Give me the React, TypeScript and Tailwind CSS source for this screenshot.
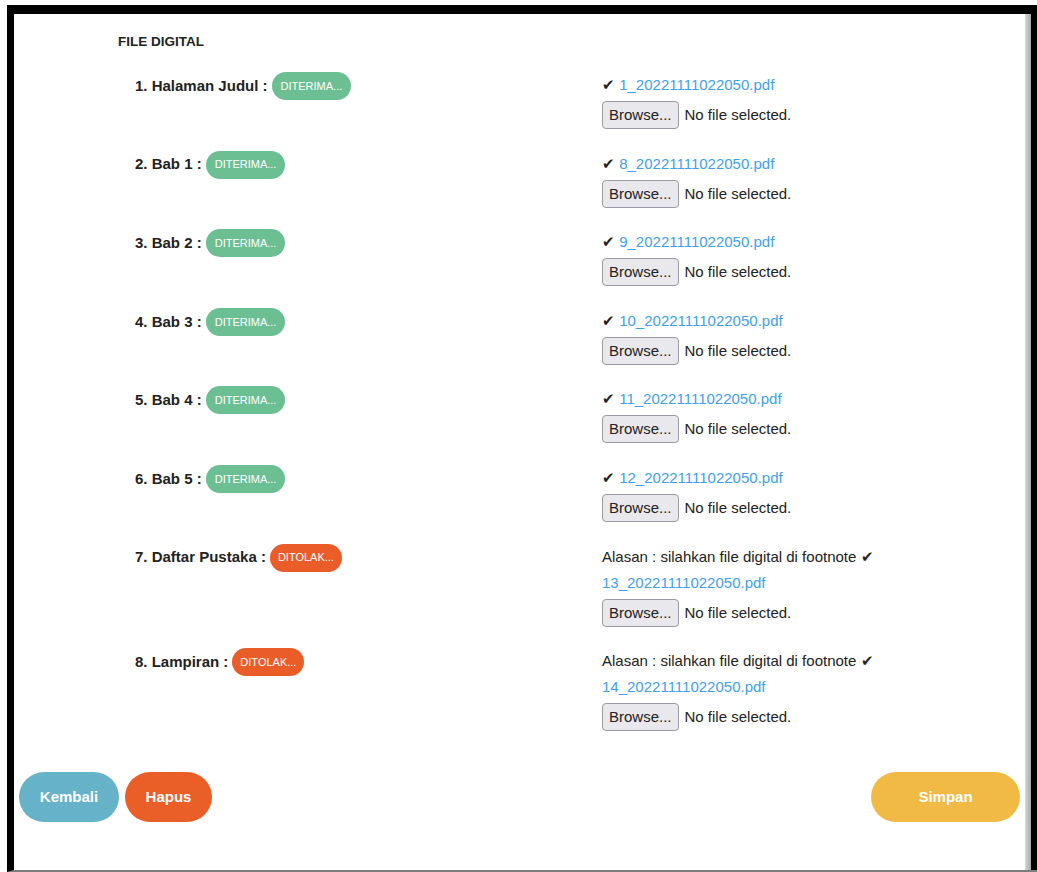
import React from 'react';

type Status = 'diterima' | 'ditolak';

interface BerkasRow {
  label: string;
  status: Status;
  file: string;
  alasan?: string;
}

const rows: BerkasRow[] = [
  { label: '1. Halaman Judul :', status: 'diterima', file: '1_20221111022050.pdf' },
  { label: '2. Bab 1 :', status: 'diterima', file: '8_20221111022050.pdf' },
  { label: '3. Bab 2 :', status: 'diterima', file: '9_20221111022050.pdf' },
  { label: '4. Bab 3 :', status: 'diterima', file: '10_20221111022050.pdf' },
  { label: '5. Bab 4 :', status: 'diterima', file: '11_20221111022050.pdf' },
  { label: '6. Bab 5 :', status: 'diterima', file: '12_20221111022050.pdf' },
  {
    label: '7. Daftar Pustaka :',
    status: 'ditolak',
    file: '13_20221111022050.pdf',
    alasan: 'silahkan file digital di footnote',
  },
  {
    label: '8. Lampiran :',
    status: 'ditolak',
    file: '14_20221111022050.pdf',
    alasan: 'silahkan file digital di footnote',
  },
];

const StatusBadge: React.FC<{ status: Status }> = ({ status }) =>
  status === 'diterima' ? (
    <span className="flex h-[28px] items-center rounded-full bg-[#6cbf93] px-[9px] text-[11px] text-white">
      DITERIMA...
    </span>
  ) : (
    <span className="flex h-[28px] items-center rounded-full bg-[#ea5d28] px-[8px] text-[11px] text-white">
      DITOLAK...
    </span>
  );

const FilePicker: React.FC = () => (
  <div className="mt-[3px] flex items-center gap-[6px]">
    <button
      type="button"
      className="h-[28px] rounded-[4px] border border-[#9a9aa4] bg-[#e9e9ed] px-[6px] text-[15px] text-[#222]"
    >
      Browse...
    </button>
    <span className="text-[15px] text-[#222]">No file selected.</span>
  </div>
);

const Row: React.FC<{ row: BerkasRow }> = ({ row }) => (
  <div className="flex">
    <div className="flex w-[467px] items-start">
      <div className="flex h-[28px] items-center gap-[4px]">
        <span className="text-[15px] font-bold text-[#222]">{row.label}</span>
        <StatusBadge status={row.status} />
      </div>
    </div>
    <div className="flex flex-col text-[15px] leading-[26px] text-[#222]">
      {row.alasan ? (
        <>
          <span>Alasan : {row.alasan} ✔</span>
          <a href="#" className="text-[#3fa1ee]">
            {row.file}
          </a>
        </>
      ) : (
        <span>
          ✔{' '}
          <a href="#" className="text-[#3fa1ee]">
            {row.file}
          </a>
        </span>
      )}
      <FilePicker />
    </div>
  </div>
);

export default function App() {
  return (
    <div className="h-[872px] w-[1037px] overflow-hidden bg-white pl-[7px] pt-[5px] font-['Liberation_Sans',Arial,sans-serif]">
      <div className="flex h-full border-b-2 border-l-[7px] border-t-[9px] border-b-[#7d7d7d] border-l-black border-t-black">
        <main className="flex flex-1 flex-col bg-white">
          <h2 className="ml-[104px] mt-[18px] text-[13.5px] font-bold leading-[20px] text-[#222]">
            FILE DIGITAL
          </h2>

          <div className="ml-[121px] mt-[20px] flex flex-col gap-[21.6px]">
            {rows.map((row) => (
              <Row key={row.file} row={row} />
            ))}
          </div>

          {/* tombol aksi */}
          <div className="mt-[41px] flex items-center justify-between px-[5px]">
            <div className="flex gap-[6px]">
              <button
                type="button"
                className="h-[50px] w-[100px] rounded-full bg-[#66b3c9] text-[15px] font-bold text-white"
              >
                Kembali
              </button>
              <button
                type="button"
                className="h-[50px] w-[87px] rounded-full bg-[#ea5e27] text-[15px] font-bold text-white"
              >
                Hapus
              </button>
            </div>
            <button
              type="button"
              className="h-[50px] w-[149px] rounded-full bg-[#f0ba44] text-[15px] font-bold text-white"
            >
              Simpan
            </button>
          </div>
        </main>
        <div className="w-[6px] bg-gradient-to-r from-[#d5dad8] to-[#a2a9a7]" />
        <div className="w-[6px] bg-black" />
      </div>
    </div>
  );
}
